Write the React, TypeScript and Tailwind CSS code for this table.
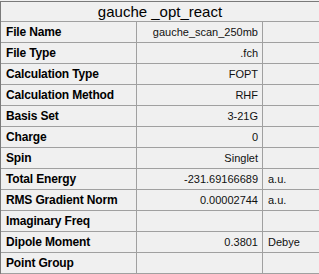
const rows: { label: string; value: string; unit?: string }[] = [
  { label: "File Name", value: "gauche_scan_250mb" },
  { label: "File Type", value: ".fch" },
  { label: "Calculation Type", value: "FOPT" },
  { label: "Calculation Method", value: "RHF" },
  { label: "Basis Set", value: "3-21G" },
  { label: "Charge", value: "0" },
  { label: "Spin", value: "Singlet" },
  { label: "Total Energy", value: "-231.69166689", unit: "a.u." },
  { label: "RMS Gradient Norm", value: "0.00002744", unit: "a.u." },
  { label: "Imaginary Freq", value: "" },
  { label: "Dipole Moment", value: "0.3801", unit: "Debye" },
  { label: "Point Group", value: "" },
];

export default function App() {
  return (
    <div
      className="w-[319px] h-[274px] overflow-hidden bg-[#f0f0f0] pt-[1px]"
      style={{ fontFamily: '"Liberation Sans", Arial, sans-serif' }}
    >
      <div className="border-t border-l border-[#7a7a7a]">
        {/* Title row */}
        <div className="h-[20px] flex items-center justify-center border-b border-[#a0a0a0] text-[15px] text-black leading-none">
          gauche _opt_react
        </div>

        {rows.map((row) => (
          <div key={row.label} className="flex h-[21px] border-b border-[#a0a0a0]">
            <div className="w-[136px] shrink-0 border-r border-[#a0a0a0] pl-[5px] flex items-center text-[12px] font-bold text-black leading-none tracking-[-0.15px]">
              {row.label}
            </div>
            <div className="w-[126px] shrink-0 border-r border-[#a0a0a0] pr-[4px] flex items-center justify-end text-[11px] text-[#111] leading-none">
              {row.value}
            </div>
            <div className="flex-1 pl-[5px] flex items-center text-[11px] text-[#111] leading-none">
              {row.unit}
            </div>
          </div>
        ))}
      </div>
    </div>
  );
}
